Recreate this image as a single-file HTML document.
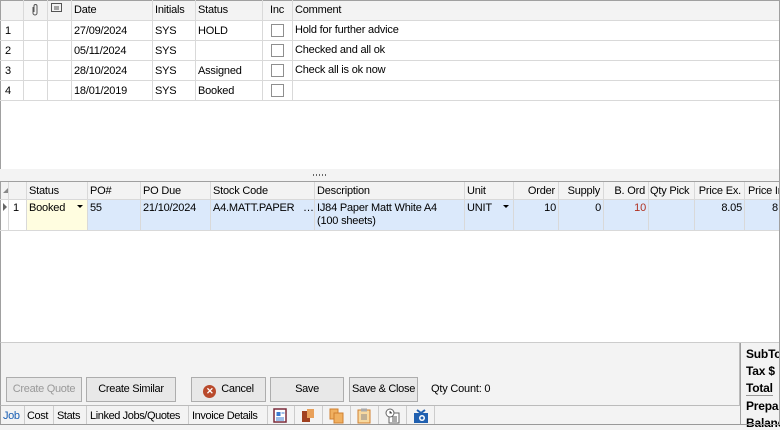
<!DOCTYPE html>
<html><head><meta charset="utf-8"><style>
*{box-sizing:border-box;margin:0;padding:0}
body{width:780px;height:425px;overflow:hidden;background:#f3f3f3;font-family:"Liberation Sans",sans-serif;font-size:11px;color:#000;position:relative}
.a{position:absolute}
.t{position:absolute;white-space:nowrap;line-height:13px;letter-spacing:-0.2px}
.vl{position:absolute;width:1px;background:#d9d9d9}
.hl{position:absolute;height:1px;background:#d9d9d9}
.btn{position:absolute;top:377px;height:25px;border:1px solid #adadad;background:#e8e8e8;text-align:center;line-height:23px;font-size:11px;white-space:nowrap;letter-spacing:-0.3px}
.cb{position:absolute;width:13px;height:13px;border:1px solid #8f8f8f;background:#fff;left:271px}
.tab{position:absolute;top:410px;font-size:11px;letter-spacing:-0.4px;white-space:nowrap;line-height:13px}
</style></head><body>
<div class="a" style="left:0;top:0;width:780px;height:169px;background:#fff;border:1px solid #a0a0a0;border-bottom:none"></div>
<div class="a" style="left:1px;top:1px;width:779px;height:19px;background:#f3f3f3"></div>
<div class="hl" style="left:0;top:20px;width:780px"></div>
<div class="hl" style="left:0;top:40px;width:780px"></div>
<div class="hl" style="left:0;top:60px;width:780px"></div>
<div class="hl" style="left:0;top:80px;width:780px"></div>
<div class="hl" style="left:0;top:100px;width:780px"></div>
<div class="vl" style="left:23px;top:0;height:100px"></div>
<div class="vl" style="left:47px;top:0;height:100px"></div>
<div class="vl" style="left:71px;top:0;height:100px"></div>
<div class="vl" style="left:152px;top:0;height:100px"></div>
<div class="vl" style="left:195px;top:0;height:100px"></div>
<div class="vl" style="left:262px;top:0;height:100px"></div>
<div class="vl" style="left:292px;top:0;height:100px"></div>
<svg class="a" style="left:30px;top:3px" width="10" height="13"><path d="M3 4v6a2 2 0 0 0 4 0V3a1.3 1.3 0 0 0-3 0v6" fill="none" stroke="#555" stroke-width="1"/></svg>
<svg class="a" style="left:51px;top:3px" width="12" height="10"><rect x="0.5" y="0.5" width="10" height="8" fill="none" stroke="#555"/><path d="M3 4h5M3 6h5" stroke="#555"/></svg>
<div class="t" style="left:74px;top:4px">Date</div>
<div class="t" style="left:155px;top:4px">Initials</div>
<div class="t" style="left:198px;top:4px">Status</div>
<div class="t" style="left:270px;top:4px">Inc</div>
<div class="t" style="left:295px;top:4px">Comment</div>
<div class="t" style="left:5px;top:25px">1</div><div class="t" style="left:74px;top:25px">27/09/2024</div><div class="t" style="left:155px;top:25px">SYS</div><div class="t" style="left:198px;top:25px">HOLD</div><div class="t" style="left:295px;top:24px">Hold for further advice</div>
<div class="t" style="left:5px;top:45px">2</div><div class="t" style="left:74px;top:45px">05/11/2024</div><div class="t" style="left:155px;top:45px">SYS</div><div class="t" style="left:295px;top:44px">Checked and all ok</div>
<div class="t" style="left:5px;top:65px">3</div><div class="t" style="left:74px;top:65px">28/10/2024</div><div class="t" style="left:155px;top:65px">SYS</div><div class="t" style="left:198px;top:65px">Assigned</div><div class="t" style="left:295px;top:64px">Check all is ok now</div>
<div class="t" style="left:5px;top:85px">4</div><div class="t" style="left:74px;top:85px">18/01/2019</div><div class="t" style="left:155px;top:85px">SYS</div><div class="t" style="left:198px;top:85px">Booked</div>
<div class="cb" style="top:24px"></div><div class="cb" style="top:44px"></div><div class="cb" style="top:64px"></div><div class="cb" style="top:84px"></div>
<div class="a" style="left:313px;top:174px;width:13px;height:2px;background:repeating-linear-gradient(90deg,#666 0 1px,transparent 1px 3px)"></div>
<div class="a" style="left:0;top:181px;width:780px;height:162px;background:#fff;border:1px solid #a0a0a0;border-bottom:1px solid #ccc"></div>
<div class="a" style="left:1px;top:182px;width:779px;height:17px;background:#f3f3f3"></div>
<div class="a" style="left:26px;top:200px;width:61px;height:30px;background:#fffde0"></div>
<div class="a" style="left:87px;top:200px;width:693px;height:30px;background:#dbe9fb"></div>
<div class="hl" style="left:0;top:199px;width:780px"></div>
<div class="hl" style="left:0;top:230px;width:780px"></div>
<div class="vl" style="left:8px;top:182px;height:48px"></div>
<div class="vl" style="left:26px;top:182px;height:48px"></div>
<div class="vl" style="left:87px;top:182px;height:48px"></div>
<div class="vl" style="left:140px;top:182px;height:48px"></div>
<div class="vl" style="left:210px;top:182px;height:48px"></div>
<div class="vl" style="left:314px;top:182px;height:48px"></div>
<div class="vl" style="left:464px;top:182px;height:48px"></div>
<div class="vl" style="left:513px;top:182px;height:48px"></div>
<div class="vl" style="left:558px;top:182px;height:48px"></div>
<div class="vl" style="left:603px;top:182px;height:48px"></div>
<div class="vl" style="left:648px;top:182px;height:48px"></div>
<div class="vl" style="left:694px;top:182px;height:48px"></div>
<div class="vl" style="left:744px;top:182px;height:48px"></div>
<svg class="a" style="left:2px;top:186px" width="6" height="8"><path d="M1 7h5V2z" fill="#888"/></svg>
<div class="t" style="left:29px;top:185px">Status</div><div class="t" style="left:90px;top:185px">PO#</div><div class="t" style="left:143px;top:185px">PO Due</div><div class="t" style="left:213px;top:185px">Stock Code</div><div class="t" style="left:317px;top:185px">Description</div><div class="t" style="left:467px;top:185px">Unit</div>
<div class="t" style="left:513px;top:185px;width:42px;text-align:right">Order</div><div class="t" style="left:558px;top:185px;width:42px;text-align:right">Supply</div><div class="t" style="left:603px;top:185px;width:42px;text-align:right">B. Ord</div><div class="t" style="left:650px;top:185px">Qty Pick</div><div class="t" style="left:694px;top:185px;width:47px;text-align:right">Price Ex.</div><div class="t" style="left:748px;top:185px">Price In</div>
<svg class="a" style="left:2px;top:203px" width="6" height="8"><path d="M1 0l4 4-4 4z" fill="#666"/></svg>
<div class="t" style="left:13px;top:202px">1</div>
<div class="t" style="left:29px;top:202px">Booked</div><svg class="a" style="left:77px;top:205px" width="6" height="4"><path d="M0 0h6L3 3z" fill="#000"/></svg>
<div class="t" style="left:90px;top:202px">55</div><div class="t" style="left:143px;top:202px">21/10/2024</div><div class="t" style="left:213px;top:202px">A4.MATT.PAPER</div><div class="t" style="left:303px;top:202px">…</div>
<div class="t" style="left:317px;top:202px">IJ84 Paper Matt White A4</div><div class="t" style="left:317px;top:215px">(100 sheets)</div>
<div class="t" style="left:467px;top:202px">UNIT</div><svg class="a" style="left:503px;top:205px" width="6" height="4"><path d="M0 0h6L3 3z" fill="#000"/></svg>
<div class="t" style="left:513px;top:202px;width:43px;text-align:right">10</div><div class="t" style="left:558px;top:202px;width:43px;text-align:right">0</div><div class="t" style="left:603px;top:202px;width:43px;text-align:right;color:#b03020">10</div><div class="t" style="left:694px;top:202px;width:48px;text-align:right">8.05</div><div class="t" style="left:772px;top:202px">8</div>
<div class="a" style="left:0;top:343px;width:740px;height:63px;border-left:1px solid #a0a0a0;border-right:1px solid #bbb;border-bottom:1px solid #bbb"></div>
<div class="btn" style="left:6px;width:76px;color:#999">Create Quote</div>
<div class="btn" style="left:86px;width:90px">Create Similar</div>
<div class="btn" style="left:191px;width:75px"><span style="display:inline-block;width:13px;height:13px;border-radius:50%;background:#b94a2c;color:#fff;font-size:9px;line-height:13px;font-weight:bold;vertical-align:-2px;margin-right:5px">✕</span>Cancel</div>
<div class="btn" style="left:270px;width:74px">Save</div>
<div class="btn" style="left:349px;width:69px">Save &amp; Close</div>
<div class="t" style="left:431px;top:383px">Qty Count: 0</div>
<div class="a" style="left:740px;top:343px;width:40px;height:82px;background:#f3f3f3;border-left:1px solid #a0a0a0"></div>
<div class="t" style="left:746px;top:348px;font-weight:bold;font-size:12px">SubTotal</div>
<div class="t" style="left:746px;top:365px;font-weight:bold;font-size:12px">Tax $</div>
<div class="t" style="left:746px;top:382px;font-weight:bold;font-size:12px;border-bottom:1px solid #999">Total</div>
<div class="t" style="left:746px;top:400px;font-weight:bold;font-size:12px">Prepaid</div>
<div class="t" style="left:746px;top:417px;font-weight:bold;font-size:12px">Balance</div>
<div class="a" style="left:0;top:406px;width:740px;height:19px;border-left:1px solid #a0a0a0"></div>
<div class="tab" style="left:3px;color:#1a5fb4">Job</div>
<div class="vl" style="left:24px;top:406px;height:19px;background:#ccc"></div>
<div class="tab" style="left:27px">Cost</div>
<div class="vl" style="left:53px;top:406px;height:19px;background:#ccc"></div>
<div class="tab" style="left:57px">Stats</div>
<div class="vl" style="left:86px;top:406px;height:19px;background:#ccc"></div>
<div class="tab" style="left:90px">Linked Jobs/Quotes</div>
<div class="vl" style="left:188px;top:406px;height:19px;background:#ccc"></div>
<div class="tab" style="left:192px">Invoice Details</div>
<div class="vl" style="left:267px;top:406px;height:19px;background:#ccc"></div>
<svg class="a" style="left:273px;top:408px" width="14" height="15"><rect x="1" y="1" width="12" height="13" fill="#fff" stroke="#7a2a3a" stroke-width="1.5"/><rect x="3.5" y="4" width="4" height="4" fill="#3b7bd0"/><path d="M3 10h8M3 12h8M8.5 5h3" stroke="#3b7bd0"/></svg>
<div class="vl" style="left:294px;top:406px;height:19px;background:#ccc"></div>
<svg class="a" style="left:301px;top:408px" width="14" height="15"><rect x="1" y="3" width="8" height="11" fill="#a04020"/><rect x="6" y="1" width="7" height="9" fill="#e8a05a"/></svg>
<div class="vl" style="left:322px;top:406px;height:19px;background:#ccc"></div>
<svg class="a" style="left:329px;top:408px" width="15" height="16"><rect x="1" y="1" width="8" height="10" fill="#f0b060" stroke="#d08030"/><rect x="5" y="5" width="9" height="10" fill="#f0b060" stroke="#d08030"/></svg>
<div class="vl" style="left:350px;top:406px;height:19px;background:#ccc"></div>
<svg class="a" style="left:357px;top:408px" width="14" height="16"><rect x="1" y="2" width="12" height="13" fill="#f7d9a0" stroke="#d08030"/><rect x="4" y="0.5" width="6" height="3" fill="#aaa"/><path d="M4 7h6M4 9h6M4 11h6" stroke="#888"/></svg>
<div class="vl" style="left:378px;top:406px;height:19px;background:#ccc"></div>
<svg class="a" style="left:385px;top:408px" width="15" height="16"><rect x="4" y="5" width="10" height="10" fill="#fff" stroke="#666"/><circle cx="5" cy="5" r="4" fill="#fff" stroke="#666"/><path d="M5 3v2h2M7 9h5M7 11h5M7 13h5" stroke="#555"/></svg>
<div class="vl" style="left:406px;top:406px;height:19px;background:#ccc"></div>
<svg class="a" style="left:413px;top:407px" width="16" height="17"><path d="M4 3l4 3 4-3" fill="none" stroke="#2060b0" stroke-width="2"/><rect x="1" y="6" width="14" height="10" fill="#2060b0"/><circle cx="9" cy="11" r="3" fill="#fff"/><circle cx="9" cy="11" r="1.5" fill="#2060b0"/></svg>
<div class="vl" style="left:434px;top:406px;height:19px;background:#ccc"></div>
<div class="a" style="left:0;top:424px;width:780px;height:1px;background:#999"></div>
<div class="a" style="left:779px;top:0;width:1px;height:425px;background:#a0a0a0"></div>
</body></html>
